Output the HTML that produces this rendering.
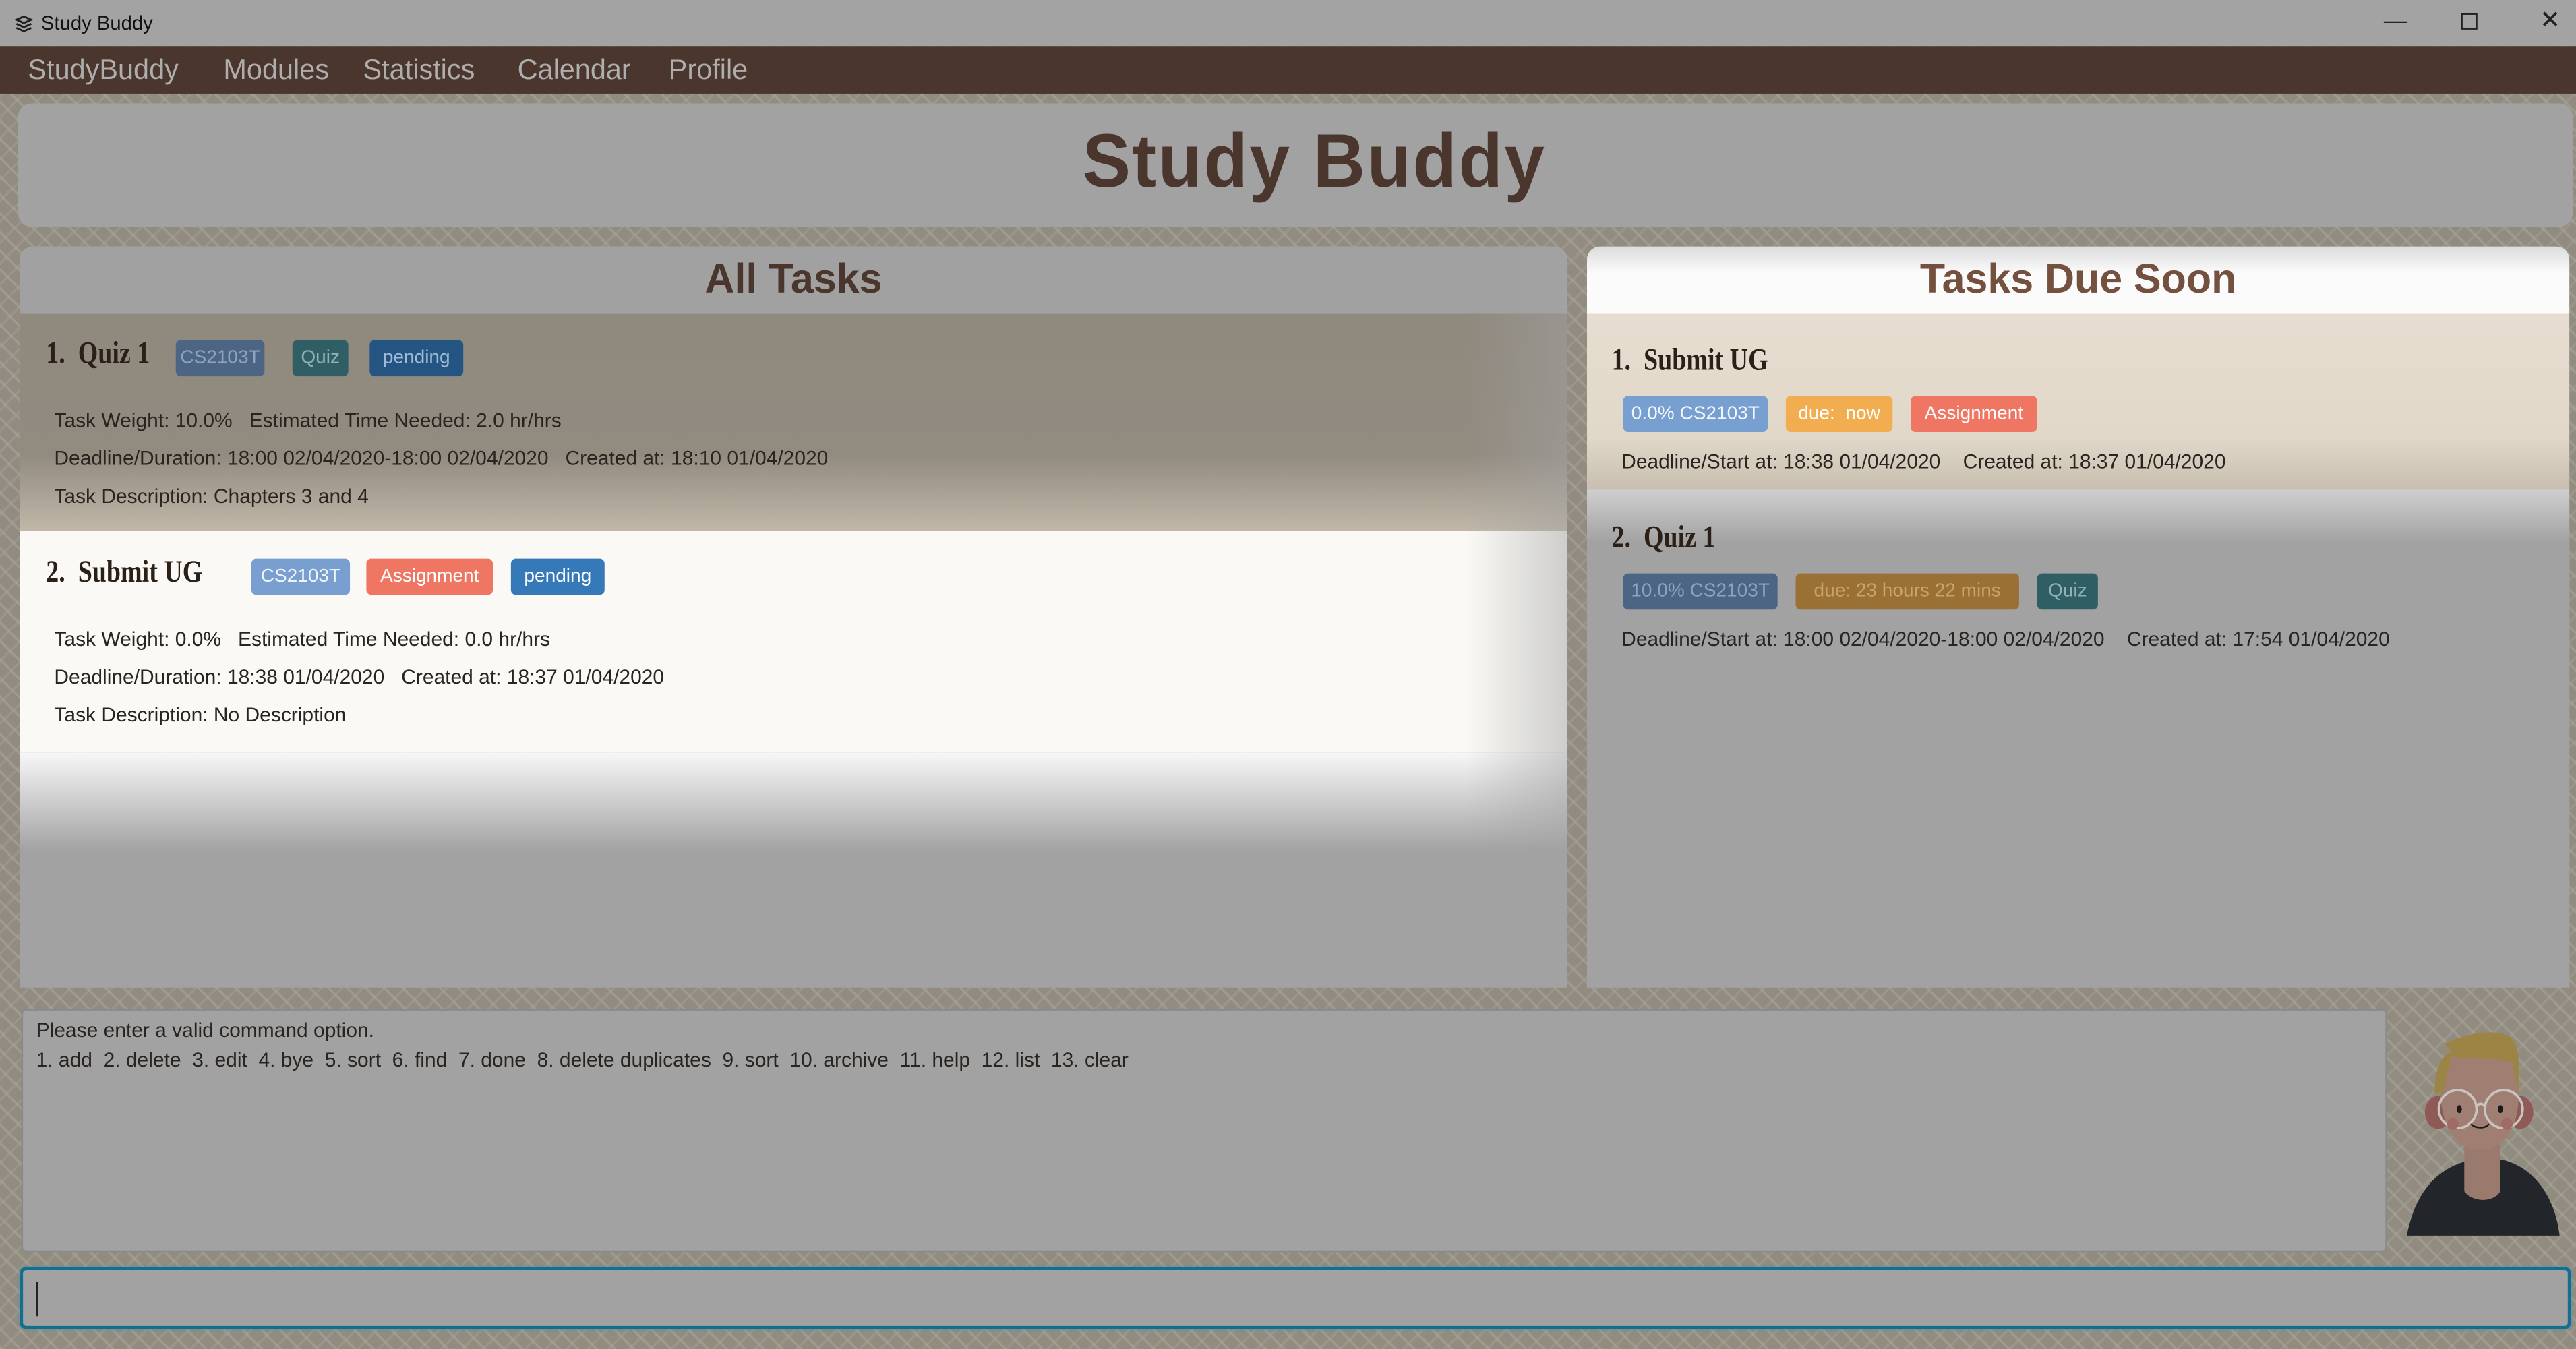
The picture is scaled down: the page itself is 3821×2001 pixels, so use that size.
<!DOCTYPE html>
<html><head><meta charset="utf-8">
<style>
html,body{margin:0;padding:0;width:3821px;height:2001px;overflow:hidden;background:#908a7e;}
#w{position:absolute;left:0;top:0;width:1568px;height:821px;transform:scale(2.43686,2.43727);transform-origin:0 0;font-family:"Liberation Sans",sans-serif;color:#2a2420;overflow:hidden;
background-color:#928c80;
background-image:repeating-linear-gradient(45deg,rgba(170,165,155,0.55) 0 1.5px,transparent 1.5px 8px),repeating-linear-gradient(-45deg,rgba(170,165,155,0.35) 0 1.5px,transparent 1.5px 9px);}
.abs{position:absolute;}
#tb{left:0;top:0;width:1568px;height:28px;background:#a3a3a3;}
#mb{left:0;top:28px;width:1568px;height:29px;background:#4b362d;}
#mb span{position:absolute;top:5px;font-size:17px;color:#aeaeae;}
.box{background:#a2a2a2;border-radius:8px;}
.title{font-weight:bold;color:#4b362d;text-align:center;}
.tag{position:absolute;height:22px;line-height:22px;border-radius:3px;font-size:11.5px;padding:0;text-align:center;box-sizing:border-box;white-space:nowrap;overflow:hidden;}
.ln{position:absolute;font-size:12.3px;white-space:nowrap;color:#2a2420;}
.tt{position:absolute;font-family:"Liberation Serif",serif;font-weight:bold;font-size:19px;white-space:nowrap;color:#2a2018;transform:scaleX(0.82);transform-origin:0 0;}
</style></head><body><div id="w">
<div id="tb" class="abs">
 <svg class="abs" style="left:9px;top:9px" width="11" height="11" viewBox="0 0 11 11"><path d="M1 3l4.5-2 4.5 2-4.5 2z M1 5.5l4.5 2 4.5-2 M1 8l4.5 2 4.5-2" fill="none" stroke="#222" stroke-width="1.2"/></svg>
 <span class="abs" style="left:25px;top:7px;font-size:12px;color:#111">Study Buddy</span>
 <span class="abs" style="left:1451px;top:4px;font-size:14px;color:#222">—</span>
 <span class="abs" style="left:1498px;top:8px;width:8px;height:8px;border:1.2px solid #222"></span>
 <span class="abs" style="left:1546px;top:3px;font-size:15px;color:#222">✕</span>
</div>
<div id="mb" class="abs">
 <span style="left:17px">StudyBuddy</span><span style="left:136px">Modules</span><span style="left:221px">Statistics</span><span style="left:315px">Calendar</span><span style="left:407px">Profile</span>
</div>
<div class="abs box" style="left:11px;top:63px;width:1555px;height:75px;"></div>
<div class="abs title" style="left:0;top:74px;width:1600px;font-size:44px;letter-spacing:1px;transform:scaleY(1.05)">Study Buddy</div>

<div class="abs" style="left:12px;top:150px;width:942px;height:451px;background:#a2a2a2;border-radius:8px 8px 0 0;overflow:hidden">
 <div class="abs" style="left:0;top:0;width:942px;height:41px;background:#a1a1a1"></div>
 <div class="abs title" style="left:0;top:6px;width:942px;font-size:25px;">All Tasks</div>
 <div class="abs" style="left:0;top:41px;width:942px;height:132px;background:linear-gradient(180deg,#8f897e 0%,#928b80 65%,#c0b7a8 100%)"></div>
 <div class="abs" style="left:0;top:173px;width:942px;height:135px;background:#faf9f5"></div>
 <div class="abs" style="left:0;top:308px;width:942px;height:60px;background:linear-gradient(180deg,#f7f7f7,#a2a2a2)"></div>
 <div class="abs" style="left:880px;top:0;width:62px;height:451px;background:linear-gradient(90deg,rgba(162,162,162,0),rgba(162,162,162,0.5))"></div>
 <div class="tt" style="left:16px;top:55px">1.&nbsp; Quiz 1</div>
 <div class="tag" style="left:95px;top:57px;width:54px;background:#4d6585;color:#8fa3bd">CS2103T</div>
 <div class="tag" style="left:166px;top:57px;width:34px;background:#2f5f65;color:#8fb1b5">Quiz</div>
 <div class="tag" style="left:213px;top:57px;width:57px;background:#245582;color:#9fbad6">pending</div>
 <div class="ln" style="left:21px;top:99px">Task Weight: 10.0% &nbsp; Estimated Time Needed: 2.0 hr/hrs</div>
 <div class="ln" style="left:21px;top:122px">Deadline/Duration: 18:00 02/04/2020-18:00 02/04/2020 &nbsp; Created at: 18:10 01/04/2020</div>
 <div class="ln" style="left:21px;top:145px">Task Description: Chapters 3 and 4</div>
 <div class="tt" style="left:16px;top:188px">2.&nbsp; Submit UG</div>
 <div class="tag" style="left:141px;top:190px;width:60px;background:#789fcf;color:#f0f4fa">CS2103T</div>
 <div class="tag" style="left:211px;top:190px;width:77px;background:#ee7663;color:#fff">Assignment</div>
 <div class="tag" style="left:299px;top:190px;width:57px;background:#3679b8;color:#fff">pending</div>
 <div class="ln" style="left:21px;top:232px">Task Weight: 0.0% &nbsp; Estimated Time Needed: 0.0 hr/hrs</div>
 <div class="ln" style="left:21px;top:255px">Deadline/Duration: 18:38 01/04/2020 &nbsp; Created at: 18:37 01/04/2020</div>
 <div class="ln" style="left:21px;top:278px">Task Description: No Description</div>
</div>

<div class="abs" style="left:966px;top:150px;width:598px;height:451px;background:#a2a2a2;border-radius:8px 8px 0 0;overflow:hidden">
 <div class="abs" style="left:0;top:0;width:598px;height:41px;background:linear-gradient(180deg,#dcdcdc,#fbfbfb 40%,#fbfbfb)"></div>
 <div class="abs title" style="left:0;top:6px;width:598px;font-size:25px;color:#74503f">Tasks Due Soon</div>
 <div class="abs" style="left:0;top:41px;width:598px;height:107px;background:linear-gradient(180deg,#e6ddd0 0%,#e1d8c9 70%,#c8bfb0 100%)"></div>
 <div class="abs" style="left:0;top:148px;width:598px;height:107px;background:linear-gradient(180deg,#cfcfcf 0%,#a2a2a2 30%,#a2a2a2 100%)"></div>
 <div class="tt" style="left:15px;top:59px">1.&nbsp; Submit UG</div>
 <div class="tag" style="left:22px;top:91px;width:88px;background:#779fcf;color:#f4f7fb">0.0% CS2103T</div>
 <div class="tag" style="left:121px;top:91px;width:65px;background:#f1ad4f;color:#fff">due:&nbsp; now</div>
 <div class="tag" style="left:197px;top:91px;width:77px;background:#ef7662;color:#fff">Assignment</div>
 <div class="ln" style="left:21px;top:124px">Deadline/Start at: 18:38 01/04/2020 &nbsp;&nbsp; Created at: 18:37 01/04/2020</div>
 <div class="tt" style="left:15px;top:167px">2.&nbsp; Quiz 1</div>
 <div class="tag" style="left:22px;top:199px;width:94px;background:#4d6585;color:#8fa3bd">10.0% CS2103T</div>
 <div class="tag" style="left:127px;top:199px;width:136px;background:#9b7034;color:#c7a46a">due: 23 hours 22 mins</div>
 <div class="tag" style="left:274px;top:199px;width:37px;background:#2f5f65;color:#8fb1b5">Quiz</div>
 <div class="ln" style="left:21px;top:232px">Deadline/Start at: 18:00 02/04/2020-18:00 02/04/2020 &nbsp;&nbsp; Created at: 17:54 01/04/2020</div>
</div>

<div class="abs" style="left:13px;top:614px;width:1440px;height:148px;background:#a2a2a2;border:1px solid #8a8a8a;border-radius:3px;box-sizing:border-box">
 <div class="ln" style="left:8px;top:5px">Please enter a valid command option.</div>
 <div class="ln" style="left:8px;top:23px">1. add&nbsp; 2. delete&nbsp; 3. edit&nbsp; 4. bye&nbsp; 5. sort&nbsp; 6. find&nbsp; 7. done&nbsp; 8. delete duplicates&nbsp; 9. sort&nbsp; 10. archive&nbsp; 11. help&nbsp; 12. list&nbsp; 13. clear</div>
</div>

<svg class="abs" style="left:1460px;top:625px" width="100" height="130" viewBox="0 0 100 130">
 <path d="M5 127 C12 90 35 80 55 80 C78 80 95 100 98 127 Z" fill="#22252a"/>
 <path d="M40 70 L40 100 C45 107 58 107 62 100 L62 65 Z" fill="#9b7a6e"/>
 <ellipse cx="24" cy="52" rx="8" ry="10" fill="#8f5a55"/>
 <ellipse cx="74" cy="52" rx="8" ry="10" fill="#8f5a55"/>
 <path d="M25 30 C25 15 40 12 50 12 C65 12 73 22 73 38 C74 60 65 75 50 75 C33 75 25 60 25 30Z" fill="#a07f72"/>
 <path d="M22 40 C22 25 26 18 32 15 L28 10 C40 5 55 0 68 6 C74 12 73 20 73 40 L69 22 C60 18 45 20 32 18 L27 40Z" fill="#9c8445"/>
 <circle cx="36" cy="50" r="11.5" fill="none" stroke="#c9c4c0" stroke-width="1.5"/>
 <circle cx="64" cy="50" r="11.5" fill="none" stroke="#c9c4c0" stroke-width="1.5"/>
 <path d="M47 49 C49 46 51 46 53 49" fill="none" stroke="#c9c4c0" stroke-width="1.5"/>
 <ellipse cx="37" cy="50" rx="1.5" ry="2.5" fill="#1a1a1a"/>
 <ellipse cx="62" cy="50" rx="1.5" ry="2.5" fill="#1a1a1a"/>
 <path d="M44 59 C47 62 53 62 55 59" fill="none" stroke="#1a1a1a" stroke-width="1"/>
 <circle cx="33" cy="59" r="3.5" fill="#a06a66"/><circle cx="66" cy="59" r="3.5" fill="#a06a66"/>
</svg>

<div class="abs" style="left:12px;top:771px;width:1553px;height:38px;background:#a2a2a2;border:2px solid #126f90;border-radius:4px;box-sizing:border-box;box-shadow:0 0 2px #5c8fa0"></div>
<div class="abs" style="left:22px;top:780px;width:1px;height:21px;background:#222"></div>
</div></body></html>
